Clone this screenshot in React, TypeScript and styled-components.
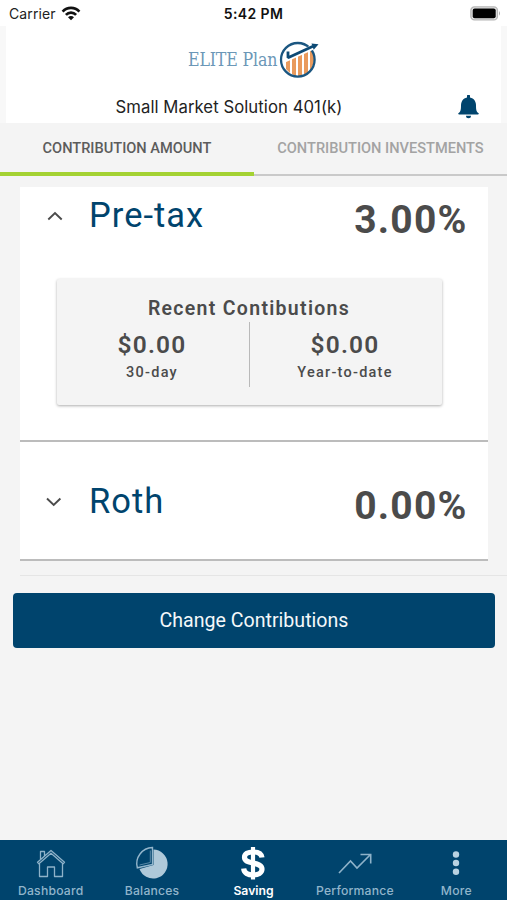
import React from 'react';
import styled, { createGlobalStyle } from 'styled-components';

const Global = createGlobalStyle`
  *{box-sizing:border-box}
  body{margin:0;background:#f4f4f4;font-family:Roboto,"Liberation Sans",sans-serif}
  button{font:inherit;border:0;padding:0;background:none;cursor:pointer}
`;
const Screen = styled.div`
  width:507px;height:900px;display:flex;flex-direction:column;background:#f4f4f4;overflow:hidden;
`;
const StatusBar = styled.div`
  height:26px;flex:none;display:grid;grid-template-columns:1fr auto 1fr;align-items:center;
  background:#fff;padding:1px 6px 0 9px;font-family:Inter,sans-serif;font-size:14px;color:#222;
`;
const Carrier = styled.div`
  display:flex;align-items:center;gap:5px;letter-spacing:.1px;
`;
const Clock = styled.div`
  font-weight:600;font-size:14px;letter-spacing:.4px;color:#111;
  margin-right:3px;
`;
const Battery = styled.svg`
  justify-self:end;
`;
const Header = styled.header`
  height:97px;flex:none;margin:0;background:#fff;border:solid #f8f8f8;border-width:0 6px;
  display:flex;flex-direction:column;
`;
const Brand = styled.div`
  height:66px;padding:14px 0 0 182px;display:flex;align-items:flex-start;
`;
const BrandName = styled.span`
  font-family:"DejaVu Serif Condensed","DejaVu Serif",serif;font-stretch:condensed;
  font-size:17.6px;font-weight:400;line-height:41px;width:91px;flex:none;white-space:nowrap;
  color:#6b97b7;letter-spacing:-.15px;
`;
const PlanRow = styled.div`
  height:31px;display:flex;align-items:center;justify-content:space-between;padding:0 22px 1px 109.5px;
`;
const PlanName = styled.div`
  font-family:Inter,sans-serif;font-size:16.7px;letter-spacing:.06px;color:#222;
`;
const Tabs = styled.nav`
  height:53px;flex:none;display:grid;grid-template-columns:254px 253px;
`;
const Tab = styled.button<{ $active?: boolean }>`
  font-size:14.6px;font-weight:500;white-space:nowrap;
  color:${p => (p.$active ? '#5c5c5c' : '#a3a3a3')};
  border-bottom:${p => (p.$active ? '4px solid #a4d233' : '2px solid #c9c9c9')};
  padding-top:${p => (p.$active ? '1px' : '0')};
  padding-bottom:${p => (p.$active ? '0' : '1px')};
`;
const Card = styled.section<{ $h: number }>`
  height:${p => p.$h}px;flex:none;margin:0 19px 0 20px;background:#fff;
  border-bottom:2px solid #bcbcbc;
`;
const Sources = styled.main`
  padding-top:11px;display:flex;flex-direction:column;
`;
const SourceRow = styled.div<{ $top: number; $indent: number }>`
  padding:${p => p.$top}px 20.5px 0 ${p => p.$indent}px;display:flex;align-items:flex-start;
`;
const Chevron = styled.svg`
  width:16px;height:10px;margin-top:24px;flex:none;
`;
const SourceName = styled.h2<{ $gap: number }>`
  margin:6px 0 0 ${p => p.$gap}px;font-size:34.5px;line-height:44px;font-weight:400;
  letter-spacing:1px;color:#00446d;
`;
const Percent = styled.div`
  margin:11px 0 0 auto;font-size:39px;line-height:44px;font-weight:700;letter-spacing:1.2px;color:#4b4b4b;
`;
const Recent = styled.div`
  width:385px;height:126px;margin:37px 0 0 37px;padding-top:17px;background:#f4f4f4;border-radius:2px;
  box-shadow:0 1px 3px rgba(0,0,0,.32);color:#4b4b4b;text-align:center;
`;
const RecentTitle = styled.h3`
  margin:0 1px 0 0;font-size:19.5px;line-height:26px;font-weight:600;letter-spacing:1.3px;
`;
const Amounts = styled.div`
  display:grid;grid-template-columns:192px 193px;height:65px;
`;
const AmountCell = styled.div`
  padding:9px 2px 0 0;
  & + &{border-left:1.5px solid #b9b9b9}
`;
const Amount = styled.div`
  font-size:24.5px;line-height:28px;font-weight:600;letter-spacing:1.2px;
`;
const Period = styled.div`
  font-size:14.5px;line-height:27px;font-weight:500;letter-spacing:1.25px;
`;
const Rule = styled.hr`
  height:1px;border:0;margin:14px 0 0 20px;background:#e5e5e5;width:487px;
`;
const Primary = styled.button`
  height:55px;flex:none;margin:17px 12px 0 13px;padding-bottom:1px;background:#00446d;border-radius:4px;color:#f4f8fa;
  font-size:19.6px;letter-spacing:0;
`;
const BottomNav = styled.nav`
  height:60px;flex:none;margin-top:auto;display:grid;grid-template-columns:repeat(5,1fr);
  background:#00446d;
`;
const NavItem = styled.button<{ $active?: boolean }>`
  display:flex;flex-direction:column;align-items:center;padding:5px 0 0 0;
  font-family:Inter,sans-serif;font-size:12.2px;line-height:18px;
  letter-spacing:${p => (p.$active ? '0' : '.2px')};
  color:${p => (p.$active ? '#fff' : '#91b5cb')};
  font-weight:${p => (p.$active ? 600 : 500)};
  svg{width:40px;height:37px;flex:none}
`;

const Wifi = () => (
  <svg width="20" height="15" viewBox="0 0 20 15" fill="none" stroke="#111" strokeWidth="2.7">
    <path d="M1.6 5.6C6.3.6 13.7.6 18.4 5.6" />
    <path d="M4.9 8.9c2.9-3 7.3-3 10.2 0" />
    <path d="M10 14.2 7 11.2c1.7-1.6 4.3-1.6 6 0z" fill="#111" stroke="none" />
  </svg>
);
const LogoMark = () => (
  <svg width="42" height="40" viewBox="0 0 42 40">
    <g fill="#e99a5c">
      <path d="M7 20.500 11 19v14l-4-4zM13 18l4-2v20l-4-2zM19 16l4-2v22h-4zM25 13l4-2v22l-4 3zM31 11l2-1c3 7 3 14-2 20z" />
    </g>
    <circle cx="18.800" cy="19.800" r="16.800" fill="none" stroke="#1b5680" strokeWidth="2.300" />
    <path d="M9 12v6.500L35 6.700" fill="none" stroke="#fff" strokeWidth="4.800" />
    <path d="M9 11.500v6.200L34 6.200" fill="none" stroke="#0d4a75" strokeWidth="2.800" strokeLinejoin="bevel" />
    <path d="M32.500 3.500 39.500 4.300l-4.800 5.500z" fill="#0d4a75" />
  </svg>
);
const Bell = () => (
  <svg width="21" height="24" viewBox="0 0 21 24" fill="#00446d">
    <path d="M9 2.500V1a1.500 1.500 0 0 1 3 0v1.500c4 .8 6 4 6 8 0 4.500.5 6.500 2.300 7.500.9.6.4 1.500-.5 1.500H1.200c-.9 0-1.400-.9-.5-1.500C2.500 17 3 15 3 10.500c0-4 2-7.200 6-8zM8 20.800h5a2.500 2.500 0 0 1-5 0z" />
  </svg>
);
const HomeIcon = () => (
  <svg viewBox="0 0 40 37" fill="none" stroke="#8eb2c9" strokeWidth="1.300" strokeLinejoin="round">
    <path d="M6.500 17.200 20 5.500l13.500 11.700-1.400 1.500L20 8.300 7.900 18.700zM9.500 14.500V6.500h4v4.500M8.500 18.500V31.500h8V22h7v9.500h8v-13" />
  </svg>
);
const PieIcon = () => (
  <svg viewBox="0 0 40 37">
    <path d="M21.500 4.500A14.500 14.500 0 1 1 7.500 24l14-4z" fill="#afc9d9" />
    <path d="M20.500 2.500A16.200 16.200 0 0 0 5.300 22.800L20.500 19.500z" fill="#00446d" stroke="#93b6cc" strokeWidth="1.400" />
    <path d="M18.300 5.500v12L7.500 20" fill="none" stroke="#6f9ab5" strokeWidth=".8" />
  </svg>
);
const DollarIcon = () => (
  <svg viewBox="0 0 40 37" fill="none" stroke="#fff">
    <path d="M29 12.500C28.500 8.700 25 7 20 7s-8.500 1.800-8.500 5.300c0 3.700 3.500 4.700 8.500 5.700s9 2.100 9 6-4 6-9 6-9-2-9.300-6.500" strokeWidth="5.200" />
    <path d="M20 2v32.500" strokeWidth="4.200" />
  </svg>
);
const TrendIcon = () => (
  <svg viewBox="0 0 40 37" fill="none" stroke="#8eb2c9" strokeWidth="1.600">
    <path d="M4 28 15.500 16l6.500 7L35.500 9.500M25.500 9.500h10.200v9" />
  </svg>
);
const MoreIcon = () => (
  <svg viewBox="0 0 40 37" fill="#b9d2e1">
    <circle cx="20" cy="9.500" r="3.200" /><circle cx="20" cy="18" r="3.200" /><circle cx="20" cy="26.800" r="3.200" />
  </svg>
);

const navItems = [
  { label: 'Dashboard', Icon: HomeIcon },
  { label: 'Balances', Icon: PieIcon },
  { label: 'Saving', Icon: DollarIcon },
  { label: 'Performance', Icon: TrendIcon },
  { label: 'More', Icon: MoreIcon },
];

export default function App() {
  return (
    <Screen>
      <Global />
      <StatusBar>
        <Carrier>Carrier<Wifi /></Carrier>
        <Clock>5:42 PM</Clock>
        <Battery width="31" height="15" viewBox="0 0 31 15">
          <rect x=".9" y=".9" width="26.500" height="13" rx="3.500" fill="#e6e6e6" stroke="#b5b5b5" strokeWidth="1.400" />
          <rect x="2.700" y="2.500" width="23" height="9.800" rx="2" fill="#000" />
          <path d="M29 5q2 2.400 0 4.800z" fill="#aaa" />
        </Battery>
      </StatusBar>
      <Header>
        <Brand><BrandName>ELITE Plan</BrandName><LogoMark /></Brand>
        <PlanRow><PlanName>Small Market Solution 401(k)</PlanName><Bell /></PlanRow>
      </Header>
      <Tabs>
        <Tab $active>CONTRIBUTION AMOUNT</Tab>
        <Tab>CONTRIBUTION INVESTMENTS</Tab>
      </Tabs>
      <Sources>
        <Card $h={255}>
          <SourceRow $top={0} $indent={27}>
            <Chevron viewBox="0 0 16 10" fill="none" stroke="#4b4b4b" strokeWidth="1.900"><path d="M1.300 8.500 8 2l6.700 6.500" /></Chevron>
            <SourceName $gap={26}>Pre-tax</SourceName>
            <Percent>3.00%</Percent>
          </SourceRow>
          <Recent>
            <RecentTitle>Recent Contibutions</RecentTitle>
            <Amounts>
              <AmountCell><Amount>$0.00</Amount><Period>30-day</Period></AmountCell>
              <AmountCell><Amount>$0.00</Amount><Period>Year-to-date</Period></AmountCell>
            </Amounts>
          </Recent>
        </Card>
        <Card $h={119}>
          <SourceRow $top={31} $indent={26}>
            <Chevron viewBox="0 0 16 10" fill="none" stroke="#4b4b4b" strokeWidth="1.900"><path d="M1 1.500 7.700 8l6.700-6.500" /></Chevron>
            <SourceName $gap={27}>Roth</SourceName>
            <Percent>0.00%</Percent>
          </SourceRow>
        </Card>
        <Rule />
        <Primary>Change Contributions</Primary>
      </Sources>
      <BottomNav>
        {navItems.map(({ label, Icon }) => (
          <NavItem key={label} $active={label === 'Saving'}><Icon />{label}</NavItem>
        ))}
      </BottomNav>
    </Screen>
  );
}
